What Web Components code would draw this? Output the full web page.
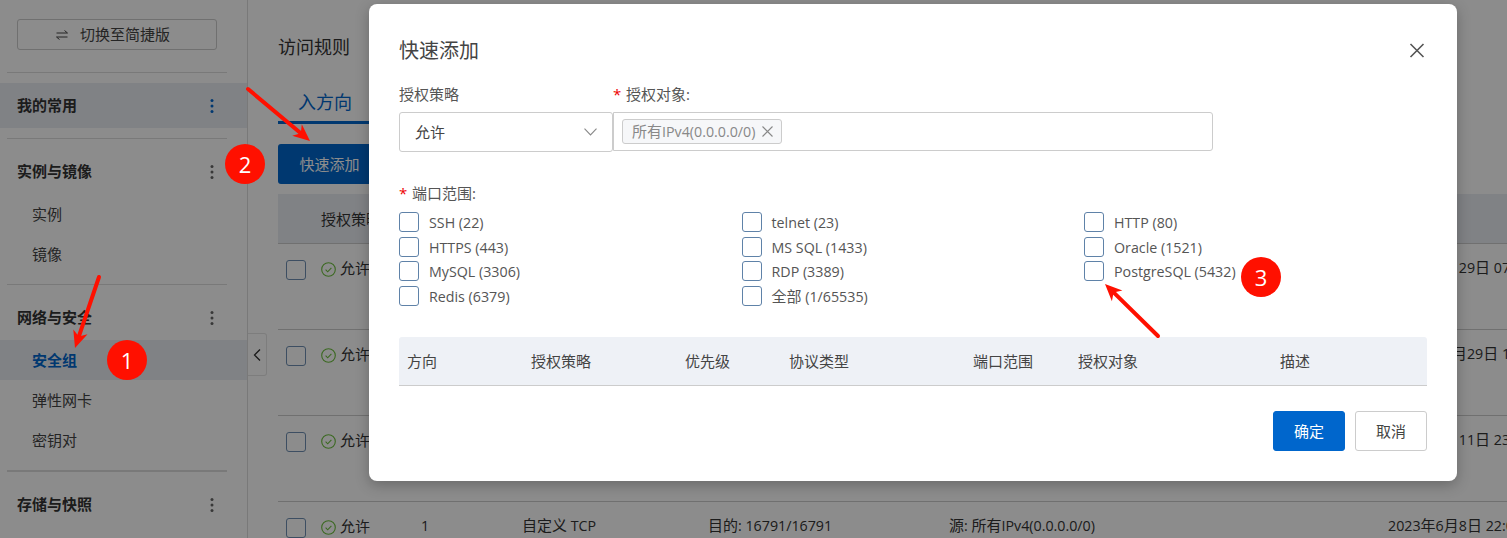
<!DOCTYPE html>
<html lang="zh">
<head>
<meta charset="utf-8">
<title>快速添加</title>
<style>
html,body{margin:0;height:538px;overflow:hidden;background:#fff}
body{font:15px/20px "Open Sans","Noto Sans CJK SC",sans-serif;color:#333}
</style>
</head>
<body>
<x-console></x-console>
<script>
class Base extends HTMLElement{
  connectedCallback(){
    if(this.shadowRoot)return;
    this.attachShadow({mode:'open'}).innerHTML=this.render();
  }
}
/* Latin runs are set slightly smaller: the CJK glyphs are 15px, the Latin ones 14.25px */
const m=s=>s.replace(/[\x20-\x7e]+/g,r=>`<span style="font-size:14.25px">${r}</span>`);
const dots=(c)=>`<svg width="4" height="16" viewBox="0 0 4 16"><circle cx="2" cy="2.5" r="1.5" fill="${c}"/><circle cx="2" cy="8" r="1.5" fill="${c}"/><circle cx="2" cy="13.5" r="1.5" fill="${c}"/></svg>`;

class XNavHead extends Base{render(){
  const active=this.hasAttribute('active');
  return `<style>:host{display:flex;align-items:center;justify-content:space-between;height:45px;padding:0 33px 0 17px;font-weight:700;color:#333;background:${active?'#eaedf3':'transparent'}}
  span{display:block;margin-top:-1px}
  svg{display:block}</style><span><slot></slot></span>${dots(active?'#0066cc':'#666')}`;
}}
class XNavItem extends Base{render(){
  const active=this.hasAttribute('active');
  return `<style>:host{display:flex;align-items:center;height:40px;padding-left:32px;color:${active?'#0066cc':'#444'};font-weight:${active?700:400};background:${active?'#eaedf3':'transparent'}}
  span{display:block;margin-top:-1px}</style><span><slot></slot></span>`;
}}
class XNavRule extends Base{render(){
  const h=this.getAttribute('h')||1;
  return `<style>:host{display:block;height:${h}px;background:#ddd;margin:10px 20px 10px 7px}</style>`;
}}
class XSidebar extends Base{render(){return `
  <style>
  :host{display:block;flex:0 0 247px;width:247px;height:538px;border-right:1px solid #ddd;overflow:hidden}
  .sw{box-sizing:border-box;display:flex;align-items:center;justify-content:center;gap:12px;height:31px;width:200px;padding:0 8px 0 0;margin:19px 0 22px 17px;border:1px solid #ccc;border-radius:3px;color:#444}
  .sw svg{display:block}
  .sw span{margin-top:-1px}
  </style>
  <div class="sw"><svg width="12" height="12" viewBox="0 0 12 12" fill="none" stroke="#444" stroke-width="1"><path d="M0.5 4H11.5L8.500 1.5"/><path d="M11.5 8H0.5L3.5 10.5"/></svg><span>切换至简捷版</span></div>
  <x-nav-rule style="margin-top:0"></x-nav-rule>
  <x-nav-head active>我的常用</x-nav-head>
  <x-nav-rule></x-nav-rule>
  <x-nav-head>实例与镜像</x-nav-head>
  <x-nav-item>实例</x-nav-item>
  <x-nav-item>镜像</x-nav-item>
  <x-nav-rule></x-nav-rule>
  <x-nav-head>网络与安全</x-nav-head>
  <x-nav-item active>安全组</x-nav-item>
  <x-nav-item>弹性网卡</x-nav-item>
  <x-nav-item>密钥对</x-nav-item>
  <x-nav-rule h="2"></x-nav-rule>
  <x-nav-head>存储与快照</x-nav-head>`;
}}
class XCheck extends Base{render(){return `
  <style>:host{display:flex;align-items:flex-start;gap:10px;height:20px;color:inherit;white-space:nowrap}
  i{display:block;flex:none;width:18px;height:18px;border:1px solid #5f82a8;border-radius:3px;background:#fff}
  span.t{display:block;height:20px;line-height:20px}
  </style><i></i><span class="t"><slot></slot></span>`;
}}
class XRuleRow extends Base{render(){
  const a=n=>this.getAttribute(n)||'';
  return `<style>
  :host{display:grid;grid-template-columns:35px 100px 101px 186px 241px 439px 200px;align-items:start;height:69px;border-bottom:1px solid #ccc;padding:16px 0 0 8px;color:#333;white-space:nowrap}
  .c{display:flex;align-items:center;height:15px}
  .allow{gap:4px}
  svg{display:block;flex:none;margin-top:3px}
  i{display:block;width:18px;height:18px;border:1px solid #6f8fb2;border-radius:3px;background:#fff}
  </style>
  <div><i></i></div>
  <div class="c allow"><svg width="15" height="15" viewBox="0 0 15 15" fill="none" stroke="#6cbf3c" stroke-width="1.1"><circle cx="7.5" cy="7.5" r="6.8"/><path d="M4.6 7.600l2.1 2.2 3.7-4"/></svg><span>允许</span></div>
  <div class="c"><div>${m('1')}</div></div>
  <div class="c"><div>${m(a('proto'))}</div></div>
  <div class="c"><div>${m(a('port'))}</div></div>
  <div class="c"><div>${m(a('src'))}</div></div>
  <div class="c"><div>${m(a('date'))}</div></div>`;
}}
class XRuleTable extends Base{render(){return `
  <style>
  :host{display:block;margin-top:10px;width:1229px;overflow:hidden}
  .h{display:grid;grid-template-columns:43px 100px 101px 186px 241px 439px 200px;align-items:center;height:49px;border-bottom:1px solid #ccc;background:#eaedf3;color:#333;white-space:nowrap}
  </style>
  <div class="h"><span></span><span>授权策略</span><span>优先级</span><span>协议类型</span><span>端口范围</span><span>授权对象</span><span>创建时间</span></div>
  <x-rule-row proto="自定义 TCP" port="目的: 22/22" src="源: 所有IPv4(0.0.0.0/0)" date="2023年6月29日 07:41:12"></x-rule-row>
  <x-rule-row proto="自定义 TCP" port="目的: 3389/3389" src="源: 所有IPv4(0.0.0.0/0)" date="2023年10月29日 18:20:37"></x-rule-row>
  <x-rule-row proto="自定义 TCP" port="目的: 8080/8080" src="源: 所有IPv4(0.0.0.0/0)" date="2023年7月11日 23:05:19"></x-rule-row>
  <x-rule-row proto="自定义 TCP" port="目的: 16791/16791" src="源: 所有IPv4(0.0.0.0/0)" date="2023年6月8日 22:03:48"></x-rule-row>`;
}}
class XMain extends Base{render(){return `
  <style>
  :host{display:block;flex:1;min-width:0;padding:36px 0 0 30px;overflow:hidden}
  h2{margin:0;font-size:18px;line-height:22px;font-weight:400;color:#333}
  .tabs{margin-top:33px;display:flex}
  .tab{padding:0 20px 8px;border-bottom:3px solid #0066cc;color:#0066cc;font-size:18px;line-height:22px;width:54px}
  button{display:block;margin-top:20px;height:40px;width:103px;border:0;border-radius:3px;background:#0066cc;color:#fff;font:inherit;padding:0}
  </style>
  <h2>访问规则</h2>
  <div class="tabs"><div class="tab">入方向</div></div>
  <button>快速添加</button>
  <x-rule-table></x-rule-table>`;
}}
class XCollapse extends Base{render(){return `
  <style>:host{position:absolute;left:248px;top:333px;width:18px;height:41px;display:flex;align-items:center;justify-content:center;background:#fff;border:1px solid #e4e4e4;border-left:0;border-radius:0 3px 3px 0}
  svg{display:block}</style>
  <svg width="8" height="12" viewBox="0 0 8 12" fill="none" stroke="#333" stroke-width="1.3"><path d="M7 .5L1.5 6 7 11.5"/></svg>`;
}}
class XQuickModal extends Base{render(){
  const ports=[['SSH (22)','telnet (23)','HTTP (80)'],['HTTPS (443)','MS SQL (1433)','Oracle (1521)'],['MySQL (3306)','RDP (3389)','PostgreSQL (5432)'],['Redis (6379)','全部 (1/65535)','']];
  return `<style>
  :host{position:absolute;left:369px;top:4px;width:1028px;padding:35px 30px 30px;background:#fff;border-radius:8px;box-shadow:0 4px 14px rgba(0,0,0,.25);color:#555}
  h3{margin:0;font-size:20px;line-height:24px;font-weight:400;color:#444}
  .close{position:absolute;right:32px;top:39px;display:block}
  .form{display:grid;grid-template-columns:214px 600px;margin-top:21px;row-gap:8px;align-items:start}
  .req::before{content:"*";color:#e00;display:inline-block;width:13px}
  .select{box-sizing:border-box;height:40px;border:1px solid #ccc;border-radius:3px;padding:0 15px;display:flex;align-items:center;justify-content:space-between;color:#444}
  .select svg{display:block}
  .input{box-sizing:border-box;height:39px;border:1px solid #ccc;border-radius:0 3px 3px 0;padding:6px 8px;display:flex;align-items:flex-start}
  .tag{box-sizing:border-box;height:25px;width:160px;display:flex;align-items:center;gap:7px;padding:0 6px 0 9px;background:#f6f7f9;border:1px solid #ccc;border-radius:3px;color:#888;white-space:nowrap}
  .tag svg{display:block;flex:none}
  .plabel{margin-top:31px;line-height:20px}
  .grid{display:grid;grid-template-columns:repeat(3,342.5px);grid-auto-rows:24.5px;margin-top:9px}
  .grid x-check{align-self:start}
  .th{display:grid;grid-template-columns:124px 154px 104px 184px 105px 202px 1fr;align-items:center;height:48px;margin-top:27px;padding-left:8px;background:#eef1f6;border-bottom:1px solid #ccc;border-radius:3px 3px 0 0;color:#444}
  .foot{display:flex;justify-content:flex-end;gap:10px;margin-top:25px}
  .btn{box-sizing:border-box;width:72px;height:40px;border-radius:3px;font:inherit;padding:0;border:1px solid #ccc;background:#fff;color:#444}
  .btn.p{background:#0066cc;border-color:#0066cc;color:#fff}
  </style>
  <h3>快速添加</h3>
  <svg class="close" width="16" height="16" viewBox="0 0 16 16" fill="none" stroke="#555" stroke-width="1.6"><path d="M1.500 1l13 13M14.500 1l-13 13"/></svg>
  <div class="form">
    <div>授权策略</div><div class="req">授权对象:</div>
    <div class="select"><span>允许</span><svg width="13" height="8" viewBox="0 0 13 8" fill="none" stroke="#888" stroke-width="1.1"><path d="M.5.7L6.500 7l6-6.300"/></svg></div>
    <div class="input"><div class="tag"><span>${m('所有IPv4(0.0.0.0/0)')}</span><svg width="11" height="11" viewBox="0 0 11 11" fill="none" stroke="#888" stroke-width="1.1"><path d="M.5.5l10 10M10.500.5l-10 10"/></svg></div></div>
  </div>
  <div class="plabel req">端口范围:</div>
  <div class="grid">${ports.flat().map(p=>p?`<x-check>${m(p)}</x-check>`:'<span></span>').join('')}</div>
  <div class="th"><span>方向</span><span>授权策略</span><span>优先级</span><span>协议类型</span><span>端口范围</span><span>授权对象</span><span>描述</span></div>
  <div class="foot"><button class="btn p">确定</button><button class="btn">取消</button></div>`;
}}
class XBadge extends Base{render(){
  return `<style>:host{position:absolute;left:${this.getAttribute('x')-20}px;top:${this.getAttribute('y')-20}px;width:40px;height:40px;border-radius:50%;background:#ff1000;color:#fff;display:flex;align-items:center;justify-content:center;font:22px/40px "Open Sans",sans-serif}</style><slot></slot>`;
}}
class XArrow extends Base{render(){
  const [x1,y1,x2,y2]=['x1','y1','x2','y2'].map(n=>+this.getAttribute(n));
  const a=Math.atan2(y2-y1,x2-x1),L=17,W=7.5,N=12;
  const p=(d,o)=>[(x2-Math.cos(a)*d-Math.sin(a)*o).toFixed(1),(y2-Math.sin(a)*d+Math.cos(a)*o).toFixed(1)];
  const n=p(N,0);
  return `<style>:host{position:absolute;left:0;top:0;width:1507px;height:538px;pointer-events:none}svg{display:block}</style>
  <svg width="1507" height="538"><line x1="${x1}" y1="${y1}" x2="${n[0]}" y2="${n[1]}" stroke="#ff1000" stroke-width="4" stroke-linecap="round"/><polygon fill="#ff1000" points="${x2},${y2} ${p(L,W)} ${n} ${p(L,-W)}"/></svg>`;
}}
class XConsole extends Base{render(){return `
  <style>
  :host{display:flex;position:relative;width:1507px;height:538px;overflow:hidden;background:#fff}
  .mask{position:absolute;inset:0;background:rgba(0,0,0,.45)}
  </style>
  <x-sidebar></x-sidebar>
  <x-main></x-main>
  <x-collapse></x-collapse>
  <div class="mask"></div>
  <x-quick-modal></x-quick-modal>
  <x-arrow x1="99" y1="277" x2="75" y2="348"></x-arrow>
  <x-arrow x1="248" y1="89" x2="310" y2="141"></x-arrow>
  <x-arrow x1="1158" y1="336" x2="1105" y2="284"></x-arrow>
  <x-badge x="127" y="360">1</x-badge>
  <x-badge x="245" y="164">2</x-badge>
  <x-badge x="1261" y="277">3</x-badge>`;
}}
const defs={'x-nav-head':XNavHead,'x-nav-item':XNavItem,'x-nav-rule':XNavRule,'x-sidebar':XSidebar,'x-check':XCheck,'x-rule-row':XRuleRow,'x-rule-table':XRuleTable,'x-main':XMain,'x-collapse':XCollapse,'x-quick-modal':XQuickModal,'x-badge':XBadge,'x-arrow':XArrow,'x-console':XConsole};
for(const k in defs)customElements.define(k,defs[k]);
</script>
</body>
</html>
